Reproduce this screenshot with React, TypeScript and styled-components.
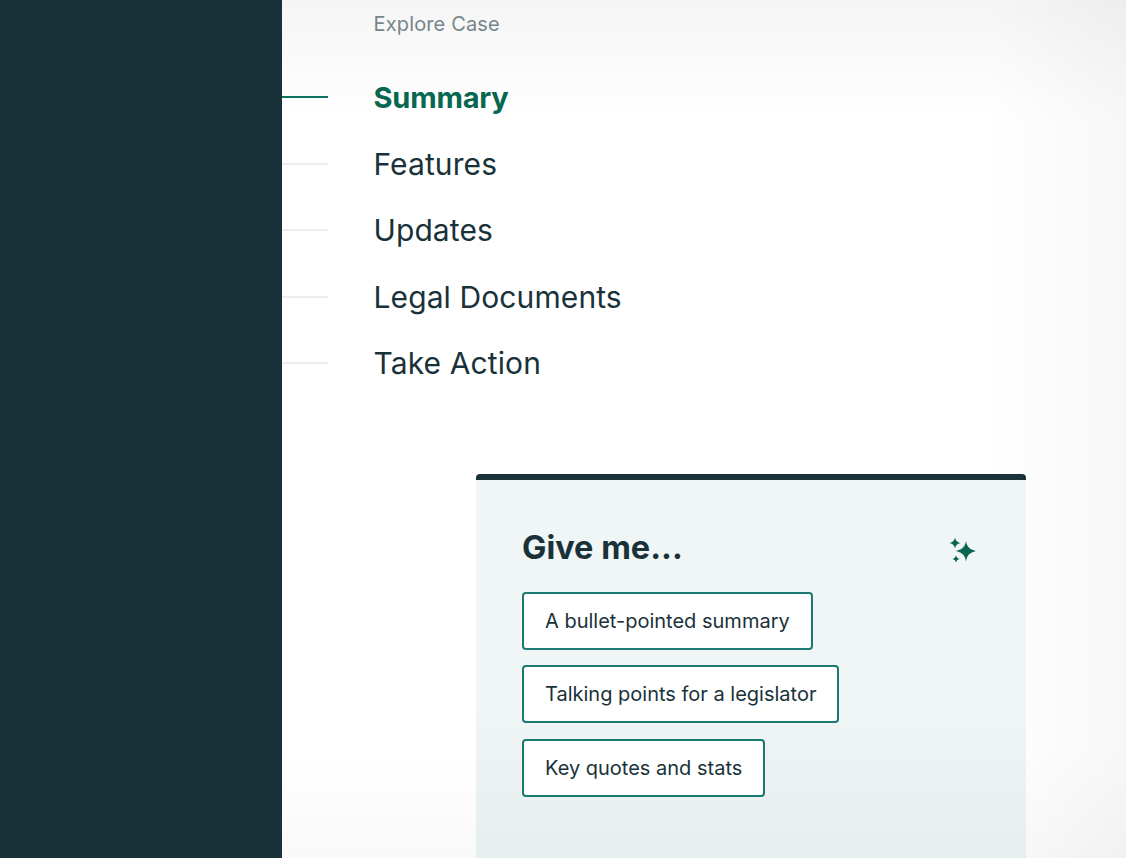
import React from "react";
import styled, { createGlobalStyle } from "styled-components";

const GlobalStyle = createGlobalStyle`
	html, body {
		margin: 0;
		padding: 0;
		height: 100%;
		overflow: hidden;
		background: #fff;
		font-family: Inter, "Liberation Sans", sans-serif;
	}
`;

const Page = styled.div`
	display: flex;
	width: 1126px;
	height: 858px;
	overflow: hidden;
`;

const Sidebar = styled.aside`
	flex: 0 0 282px;
	background: #19323a;
`;

const Main = styled.main`
	flex: 1;
	display: flex;
	flex-direction: column;
	min-width: 0;
	overflow: hidden;
	background: linear-gradient(180deg, rgba(0, 0, 0, 0.04), rgba(0, 0, 0, 0) 120px),
		linear-gradient(270deg, rgba(0, 0, 0, 0.03), rgba(0, 0, 0, 0) 140px),
		linear-gradient(0deg, rgba(0, 0, 0, 0.025), rgba(0, 0, 0, 0) 110px), #fff;
`;

const NavLabel = styled.div`
	margin: 12px 0 0 91.5px;
	font-size: 20px;
	line-height: 24px;
	letter-spacing: 0.15px;
	color: #76868a;
`;

const Nav = styled.nav`
	display: flex;
	flex-direction: column;
	margin-top: 28px;
`;

const NavItem = styled.a<{ $active?: boolean }>`
	display: flex;
	align-items: center;
	gap: 45.5px;
	height: 66.5px;
	font-size: ${({ $active }) => ($active ? "29px" : "30px")};
	letter-spacing: ${({ $active }) => ($active ? "-0.2px" : "0.1px")};
	font-weight: ${({ $active }) => ($active ? 700 : 400)};
	color: ${({ $active }) => ($active ? "#076750" : "#19323a")};

	&::before {
		content: "";
		flex: 0 0 46px;
		height: 2px;
		background: ${({ $active }) => ($active ? "#0b7360" : "#ebeeee")};
	}
`;

const Card = styled.section`
	flex: 1;
	margin: 77px 100px 0 194px;
	padding: 46px 46px 0;
	border-top: 6px solid #19323a;
	border-radius: 4px 4px 0 0;
	background: linear-gradient(180deg, #f0f5f5 60%, #e7eeee 100%);
`;

const CardHeader = styled.header`
	display: flex;
	align-items: center;
	justify-content: space-between;
	height: 44px;
	padding-right: 4px;
`;

const CardTitle = styled.h2`
	margin: 0;
	font-size: 32.5px;
	font-weight: 700;
	color: #19323a;
`;

const Options = styled.div`
	display: flex;
	flex-direction: column;
	align-items: flex-start;
	gap: 15.7px;
	margin-top: 22px;
`;

const Option = styled.button`
	display: block;
	height: 58px;
	padding: 0 21px;
	border: 2px solid #1a7a72;
	border-radius: 4px;
	background: #fff;
	font-family: inherit;
	font-size: 20px;
	color: #19323a;
`;

const SparkleIcon = styled.svg`
	margin-top: 6px;
	fill: #076750;
`;

const Sparkles = () => (
	<SparkleIcon width="28" height="28" viewBox="0 0 28 28">
		<path d="M18 4 C18.900 9.500 21.500 12.500 28 14 C21.500 15.500 18.900 18.500 18 24.500 C17.100 18.500 14.500 15.500 8 14 C14.500 12.500 17.100 9.500 18 4Z" />
		<path d="M7 0.500 C7.500 3.300 9 5.300 12.500 6 C9 6.700 7.500 8.700 7 11.500 C6.500 8.700 5 6.700 1.500 6 C5 5.300 6.500 3.300 7 0.500Z" />
		<path d="M8 18.300 C8.300 20.200 9.400 21.400 11.700 22 C9.400 22.600 8.300 23.800 8 25.700 C7.700 23.800 6.600 22.600 4.300 22 C6.600 21.400 7.700 20.200 8 18.300Z" />
	</SparkleIcon>
);

const navItems = ["Summary", "Features", "Updates", "Legal Documents", "Take Action"];
const options = ["A bullet-pointed summary", "Talking points for a legislator", "Key quotes and stats"];

export default function App() {
	return (
		<Page>
			<GlobalStyle />
			<Sidebar />
			<Main>
				<NavLabel>Explore Case</NavLabel>
				<Nav>
					{navItems.map((item, i) => (
						<NavItem key={item} $active={i === 0}>
							{item}
						</NavItem>
					))}
				</Nav>
				<Card>
					<CardHeader>
						<CardTitle>Give me...</CardTitle>
						<Sparkles />
					</CardHeader>
					<Options>
						{options.map((option) => (
							<Option key={option}>{option}</Option>
						))}
					</Options>
				</Card>
			</Main>
		</Page>
	);
}
